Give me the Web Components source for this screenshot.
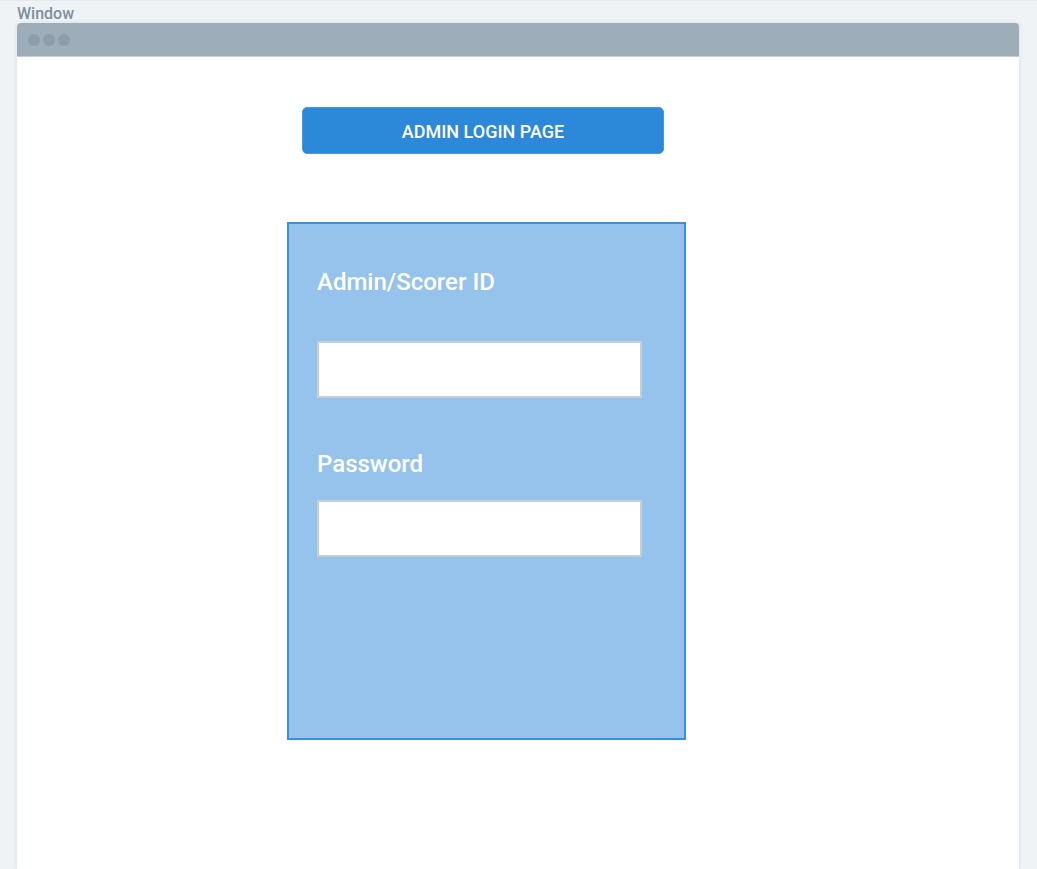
<!DOCTYPE html>
<html lang="en">
<head>
<meta charset="utf-8">
<title>Admin login</title>
<style>
body { margin: 0; background: #eff3f6; font-family: Roboto, "Liberation Sans", sans-serif; }
</style>
</head>
<body>
<app-window label="Window">
  <login-page>
    <page-button>ADMIN LOGIN PAGE</page-button>
    <login-panel>
      <text-field label="Admin/Scorer ID" name="id" type="text" roomy></text-field>
      <text-field label="Password" name="password" type="password"></text-field>
    </login-panel>
  </login-page>
</app-window>
<script>
class AppWindow extends HTMLElement {
  connectedCallback() {
    this.attachShadow({ mode: 'open' }).innerHTML = `
      <style>
        :host { display: flex; flex-direction: column; box-sizing: border-box; min-height: 100vh; padding: 3px 18px 0 17px; border-top: 1px solid #e2e8ec; }
        .name { font-size: 16px; line-height: 19px; font-weight: 500; color: #7c8f9d; }
        .frame { flex: 1; display: flex; flex-direction: column; background: #fff; border-radius: 4px 4px 0 0; box-shadow: 0 0 4px rgba(90, 120, 140, .16); }
        .bar { display: flex; align-items: center; gap: 3px; box-sizing: border-box; height: 34px; padding: 0 11px; background: #9dadb9; border-bottom: 1px solid #c3ced6; border-radius: 4px 4px 0 0; }
        .dot { width: 12px; height: 12px; border-radius: 50%; background: #8d9daa; }
      </style>
      <div class="name"></div>
      <div class="frame">
        <div class="bar"><span class="dot"></span><span class="dot"></span><span class="dot"></span></div>
        <slot></slot>
      </div>`;
    this.shadowRoot.querySelector('.name').textContent = this.getAttribute('label');
  }
}
class LoginPage extends HTMLElement {
  connectedCallback() {
    this.attachShadow({ mode: 'open' }).innerHTML = `
      <style>
        :host { display: grid; grid-template-columns: 270fr 399fr 333fr; padding: 50px 0 100px; }
        .content { grid-column: 2; display: flex; flex-direction: column; gap: 68px; }
      </style>
      <div class="content"><slot></slot></div>`;
  }
}
class PageButton extends HTMLElement {
  connectedCallback() {
    this.attachShadow({ mode: 'open' }).innerHTML = `
      <style>
        :host { display: block; padding: 0 22px 0 15px; }
        button { display: block; width: 100%; height: 47px; padding: 2px 0 0; border: 1px solid #479ae0; border-radius: 5px; background: #2c88d9; color: #fff; font: 500 18px/24px Roboto, "Liberation Sans", sans-serif; }
      </style>
      <button type="button"><slot></slot></button>`;
  }
}
class LoginPanel extends HTMLElement {
  connectedCallback() {
    this.attachShadow({ mode: 'open' }).innerHTML = `
      <style>
        :host { display: block; }
        form { display: flex; flex-direction: column; gap: 50px; box-sizing: border-box; min-height: 518px; padding: 42px 42px 42px 28px; border: 2px solid #3a90e0; background: #96c3ec; }
      </style>
      <form><slot></slot></form>`;
  }
}
class TextField extends HTMLElement {
  connectedCallback() {
    this.attachShadow({ mode: 'open' }).innerHTML = `
      <style>
        :host { display: flex; flex-direction: column; gap: 20px; }
        :host([roomy]) { gap: 43px; }
        label { font-size: 24px; line-height: 32px; font-weight: 500; color: #fff; }
        input { box-sizing: border-box; width: 100%; height: 57px; margin: 0; padding: 0 12px; border: 2px solid #c3cfd9; border-radius: 0; background: #fff; font: 20px Roboto, "Liberation Sans", sans-serif; }
      </style>
      <label for="field"></label>
      <input id="field">`;
    this.shadowRoot.querySelector('label').textContent = this.getAttribute('label');
    const input = this.shadowRoot.querySelector('input');
    input.type = this.getAttribute('type');
    input.name = this.getAttribute('name');
  }
}
customElements.define('app-window', AppWindow);
customElements.define('login-page', LoginPage);
customElements.define('page-button', PageButton);
customElements.define('login-panel', LoginPanel);
customElements.define('text-field', TextField);
</script>
</body>
</html>
